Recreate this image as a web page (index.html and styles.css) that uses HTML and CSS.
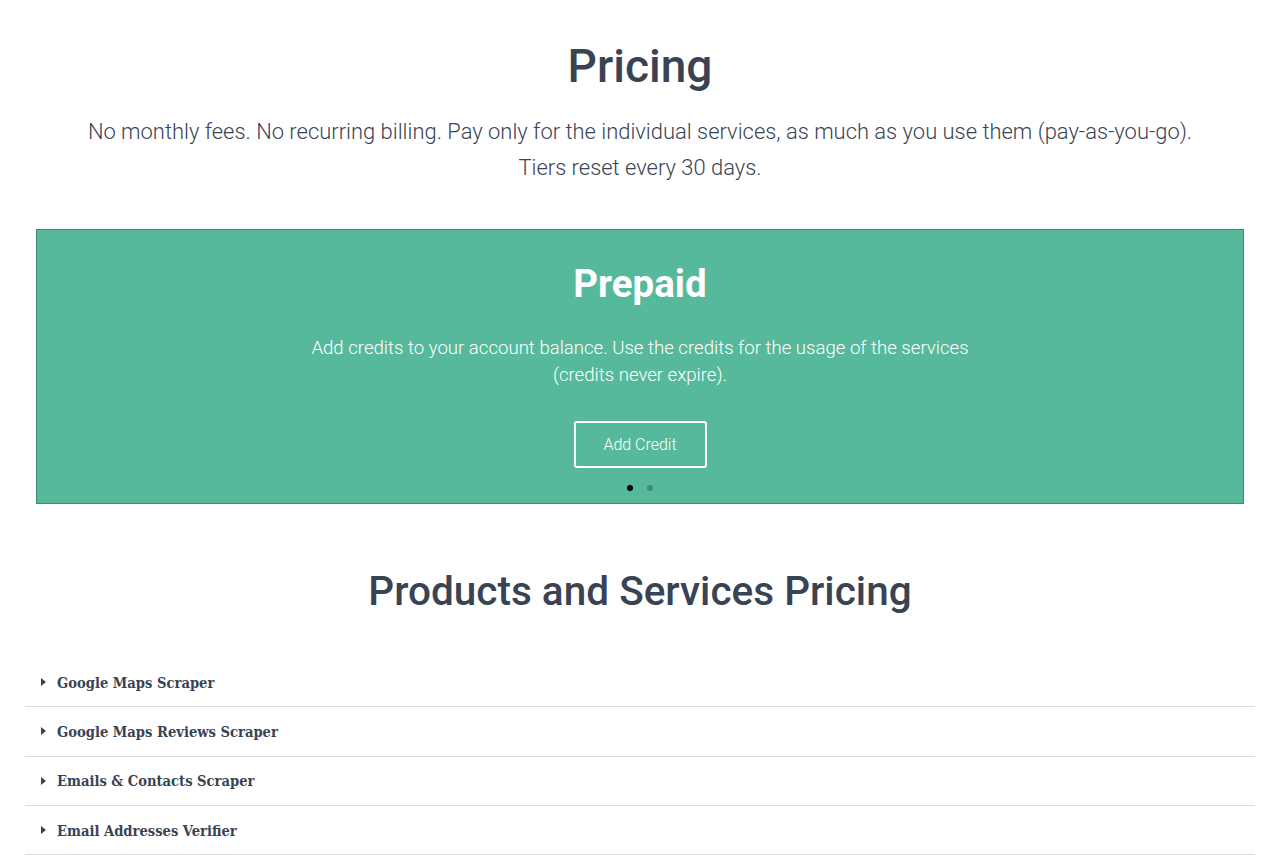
FILE: index.html
```html
<!DOCTYPE html>
<html>
<head>
<meta charset="utf-8">
<link rel="stylesheet" href="styles.css">
</head>
<body>
<div class="page">
  <section class="intro">
    <h1 class="title">Pricing</h1>
    <p class="lead">No monthly fees. No recurring billing. Pay only for the individual services, as much as you use them (pay-as-you-go).<br>Tiers reset every 30 days.</p>
  </section>
  <section class="prepaid">
    <h2 class="prepaid-title">Prepaid</h2>
    <p class="prepaid-text">Add credits to your account balance. Use the credits for the usage of the services (credits never expire).</p>
    <a class="btn">Add Credit</a>
    <div class="dots"><span class="dot active"></span><span class="dot"></span></div>
  </section>
  <h2 class="section-title">Products and Services Pricing</h2>
  <ul class="list">
    <li class="item"><span class="caret"></span>Google Maps Scraper</li>
    <li class="item"><span class="caret"></span>Google Maps Reviews Scraper</li>
    <li class="item"><span class="caret"></span>Emails &amp; Contacts Scraper</li>
    <li class="item"><span class="caret"></span>Email Addresses Verifier</li>
  </ul>
</div>
</body>
</html>
```
FILE: styles.css
```css
html, body { margin: 0; padding: 0; background: #fff; }
body { font-family: Roboto, "Noto Sans", sans-serif; color: #3a4353; }
.page { padding: 0 26px; }
.intro { text-align: center; padding-top: 38px; }
.title { margin: 0; font-size: 46px; font-weight: 500; line-height: 56px; color: #3a4353; }
.lead { margin: 20px 0 0; font-size: 21.95px; font-weight: 300; line-height: 36px; color: #3a4353; }
.prepaid {
  margin: 43px 10px 0 10px;
  background: #57b99b;
  border: 1px solid #3f8a73;
  text-align: center;
  color: #fff;
  padding: 30px 0 10px;
  display: flex; flex-direction: column; align-items: center;
}
.prepaid-title { margin: 0; font-size: 38.5px; font-weight: 700; line-height: 48px; }
.prepaid-text { margin: 27px 0 0; width: 690px; font-size: 18.6px; font-weight: 300; line-height: 27px; }
.btn {
  margin-top: 32px; box-sizing: border-box; width: 133px; height: 47px;
  border: 2px solid #fff; border-radius: 3px; display: flex; align-items: center; justify-content: center;
  font-size: 16px; font-weight: 300; color: #fff;
}
.dots { display: flex; gap: 14px; margin-top: 15px; height: 10px; align-items: center; }
.dot { width: 6px; height: 6px; border-radius: 50%; background: #3f8c74; }
.dot.active { background: #000; }
.section-title { margin: 62px 0 0; text-align: center; font-size: 40.5px; font-weight: 500; line-height: 50px; color: #3a4353; }
.list { list-style: none; margin: 42px 0 0 -1px; padding: 0; width: 1230px; }
.item {
  height: 48.3px; border-bottom: 1px solid #dcdcdc; display: flex; align-items: center;
  font-family: "DejaVu Serif Condensed", "DejaVu Serif", serif; font-weight: 700; font-size: 14.6px; color: #3a4353;
  padding-left: 16px;
}
.caret { width: 0; height: 0; border-top: 4px solid transparent; border-bottom: 4px solid transparent; border-left: 5px solid #3a4353; margin-right: 11px; }
```
